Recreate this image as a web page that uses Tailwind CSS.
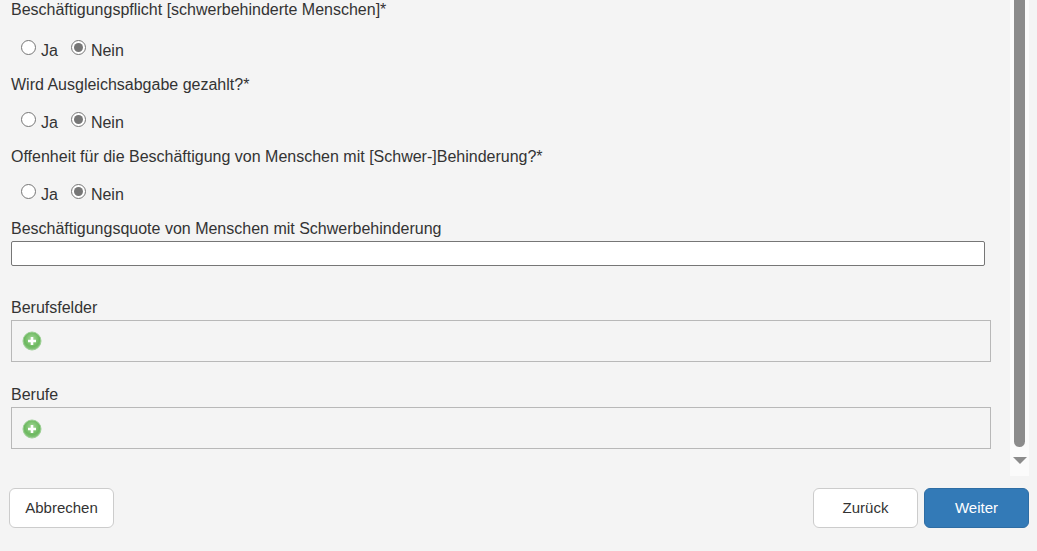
<!DOCTYPE html>
<html lang="de">
<head>
<meta charset="utf-8">
<script src="https://cdn.jsdelivr.net/npm/@tailwindcss/browser@4"></script>
<title>Formular</title>
</head>
<body class="w-[1037px] h-[551px] overflow-hidden bg-[#f4f4f4] text-[#333333] font-['Liberation_Sans',Arial,sans-serif] text-[16px] leading-[20px]">
<div class="flex h-[476px]">
  <main class="w-[1010px] pl-[11px] flex flex-col">
    <p class="h-[20px]">Beschäftigungspflicht [schwerbehinderte Menschen]*</p>
    <div class="flex items-center h-[20px] mt-[21px] pl-[10px]">
      <span class="w-[15px] h-[15px] rounded-full border border-[#767676] bg-white mt-[-7px]"></span>
      <span class="ml-[5px] mr-[13px]">Ja</span>
      <span class="w-[15px] h-[15px] rounded-full border border-[#767676] bg-white flex items-center justify-center mt-[-7px]"><span class="w-[9px] h-[9px] rounded-full bg-[#767676]"></span></span>
      <span class="ml-[5px]">Nein</span>
    </div>
    <p class="h-[20px] mt-[14px]">Wird Ausgleichsabgabe gezahlt?*</p>
    <div class="flex items-center h-[20px] mt-[18px] pl-[10px]">
      <span class="w-[15px] h-[15px] rounded-full border border-[#767676] bg-white mt-[-7px]"></span>
      <span class="ml-[5px] mr-[13px]">Ja</span>
      <span class="w-[15px] h-[15px] rounded-full border border-[#767676] bg-white flex items-center justify-center mt-[-7px]"><span class="w-[9px] h-[9px] rounded-full bg-[#767676]"></span></span>
      <span class="ml-[5px]">Nein</span>
    </div>
    <p class="h-[20px] mt-[14px]">Offenheit für die Beschäftigung von Menschen mit [Schwer-]Behinderung?*</p>
    <div class="flex items-center h-[20px] mt-[18px] pl-[10px]">
      <span class="w-[15px] h-[15px] rounded-full border border-[#767676] bg-white mt-[-7px]"></span>
      <span class="ml-[5px] mr-[13px]">Ja</span>
      <span class="w-[15px] h-[15px] rounded-full border border-[#767676] bg-white flex items-center justify-center mt-[-7px]"><span class="w-[9px] h-[9px] rounded-full bg-[#767676]"></span></span>
      <span class="ml-[5px]">Nein</span>
    </div>
    <p class="h-[20px] mt-[14px]">Beschäftigungsquote von Menschen mit Schwerbehinderung</p>
    <div class="w-[974px] h-[25px] mt-[2px] border border-[#767676] rounded-[2px] bg-white"></div>
    <p class="h-[20px] mt-[32px]">Berufsfelder</p>
    <div class="w-[980px] h-[42px] mt-[2px] border border-[#b8b8b8] flex items-center pl-[10px]">
      <svg width="20" height="20" viewBox="0 0 20 20"><defs><radialGradient id="g1" cx="50%" cy="40%" r="60%"><stop offset="0%" stop-color="#a6d99a"/><stop offset="70%" stop-color="#6cb85f"/><stop offset="100%" stop-color="#8cc683"/></radialGradient></defs><circle cx="10" cy="10" r="9" fill="url(#g1)" stroke="#9ccf94" stroke-width="1"/><path d="M10 6v8M6 10h8" stroke="#fff" stroke-width="2.6"/></svg>
    </div>
    <p class="h-[20px] mt-[23px]">Berufe</p>
    <div class="w-[980px] h-[42px] mt-[2px] border border-[#b8b8b8] flex items-center pl-[10px] pt-[2px]">
      <svg width="20" height="20" viewBox="0 0 20 20"><defs><radialGradient id="g2" cx="50%" cy="40%" r="60%"><stop offset="0%" stop-color="#a6d99a"/><stop offset="70%" stop-color="#6cb85f"/><stop offset="100%" stop-color="#8cc683"/></radialGradient></defs><circle cx="10" cy="10" r="9" fill="url(#g2)" stroke="#9ccf94" stroke-width="1"/><path d="M10 6v8M6 10h8" stroke="#fff" stroke-width="2.6"/></svg>
    </div>
  </main>
  <div class="w-[19px] h-[476px] bg-[#fbfbfb] flex flex-col items-center">
    <div class="w-[11px] h-[447px] rounded-b-[6px] bg-[#8c8c8c] shrink-0"></div>
    <div class="mt-[10px] w-0 h-0 border-l-[7px] border-r-[7px] border-t-[7px] border-l-transparent border-r-transparent border-t-[#8c8c8c]"></div>
  </div>
</div>
<footer class="flex items-center pl-[9px] pr-[8px] mt-[12px] text-[15px]">
  <button class="w-[105px] h-[40px] bg-white border border-[#cccccc] rounded-[6px] text-[#333333]">Abbrechen</button>
  <button class="ml-auto w-[105px] h-[40px] bg-white border border-[#cccccc] rounded-[6px] text-[#333333]">Zurück</button>
  <button class="ml-[6px] w-[105px] h-[40px] bg-[#337ab7] border border-[#2e6da4] rounded-[6px] text-white">Weiter</button>
</footer>
</body>
</html>
